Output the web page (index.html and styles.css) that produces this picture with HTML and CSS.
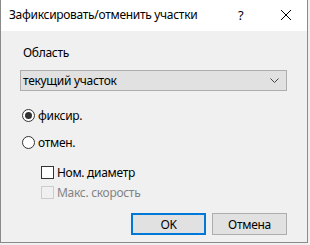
FILE: index.html
```html
<!DOCTYPE html>
<html>
<head>
<meta charset="utf-8">
<link rel="stylesheet" href="styles.css">
</head>
<body>
<div class="window">
  <div class="titlebar">
    <span class="title">Зафиксировать/отменить участки</span>
    <span class="help">?</span>
    <span class="close">
      <svg width="10" height="10" viewBox="0 0 10 10"><path d="M0 0L10 10M10 0L0 10" stroke="#000" stroke-width="1"/></svg>
    </span>
  </div>
  <div class="content">
    <div class="label">Область</div>
    <div class="combo">
      <span>текущий участок</span>
      <svg class="chev" width="9" height="5" viewBox="0 0 9 5"><path d="M0.5 0.5L4.5 4.5L8.5 0.5" fill="none" stroke="#444" stroke-width="1"/></svg>
    </div>
    <div class="radio first"><span class="rbox checked"><span class="dot"></span></span><span>фиксир.</span></div>
    <div class="radio second"><span class="rbox"></span><span>отмен.</span></div>
    <div class="check"><span class="cbox"></span><span>Ном. диаметр</span></div>
    <div class="check disabled"><span class="cbox"></span><span>Макс. скорость</span></div>
    <div class="buttons">
      <div class="btn default">OK</div>
      <div class="btn">Отмена</div>
    </div>
  </div>
</div>
</body>
</html>
```
FILE: styles.css
```css
html, body {
  margin: 0;
  padding: 0;
  background: #f0f0f0;
}
body {
  font-family: "Noto Sans", "Liberation Sans", sans-serif;
  font-size: 12px;
  letter-spacing: -0.3px;
  color: #000;
}
.window {
  width: 308px;
  height: 243px;
  border: 1px solid #8a8a8a;
  border-top: none;
  box-sizing: border-box;
  background: #f0f0f0;
  display: flex;
  flex-direction: column;
}
.titlebar {
  height: 31px;
  background: #fff;
  display: flex;
  align-items: center;
  padding-left: 8px;
  flex-shrink: 0;
}
.title {
  flex: 1;
  font-size: 12px;
  margin-top: -2px;
}
.help {
  width: 14px;
  font-size: 13px;
  margin-right: 29px;
  margin-top: -2px;
}
.close {
  width: 10px;
  height: 10px;
  margin-right: 16px;
  display: flex;
  margin-top: -2px;
}
.content {
  padding: 0 20px 0 19px;
  display: flex;
  flex-direction: column;
}
.label {
  margin-top: 14px;
  padding-left: 3px;
  line-height: 16px;
}
.combo {
  margin-top: 9px;
  height: 21px;
  box-sizing: border-box;
  border: 1px solid #adadad;
  background: #e1e1e1;
  display: flex;
  align-items: center;
  justify-content: space-between;
  padding: 0 7px 0 2px;
}
.chev {
  display: block;
}
.radio {
  display: flex;
  align-items: center;
  height: 16px;
  padding-left: 2px;
}
.radio.first {
  margin-top: 16px;
}
.radio.second {
  margin-top: 11px;
}
.rbox {
  width: 13px;
  height: 13px;
  border: 1px solid #333;
  border-radius: 50%;
  box-sizing: border-box;
  background: #fff;
  display: flex;
  align-items: center;
  justify-content: center;
  margin-right: 3px;
}
.dot {
  width: 7px;
  height: 7px;
  border-radius: 50%;
  background: #333;
}
.check {
  display: flex;
  align-items: center;
  height: 16px;
  margin-top: 14px;
  padding-left: 21px;
}
.check + .check {
  margin-top: 4px;
}
.cbox {
  width: 13px;
  height: 13px;
  border: 1px solid #333;
  box-sizing: border-box;
  background: #fff;
  margin-right: 3px;
}
.check.disabled {
  color: #838383;
}
.check.disabled .cbox {
  border-color: #cccccc;
  background: #f0f0f0;
}
.buttons {
  display: flex;
  justify-content: flex-end;
  gap: 6px;
  margin-top: 13px;
}
.btn {
  width: 75px;
  height: 22px;
  box-sizing: border-box;
  border: 1px solid #adadad;
  background: #e1e1e1;
  display: flex;
  align-items: center;
  justify-content: center;
}
.btn.default {
  border: 2px solid #0078d7;
}
```
